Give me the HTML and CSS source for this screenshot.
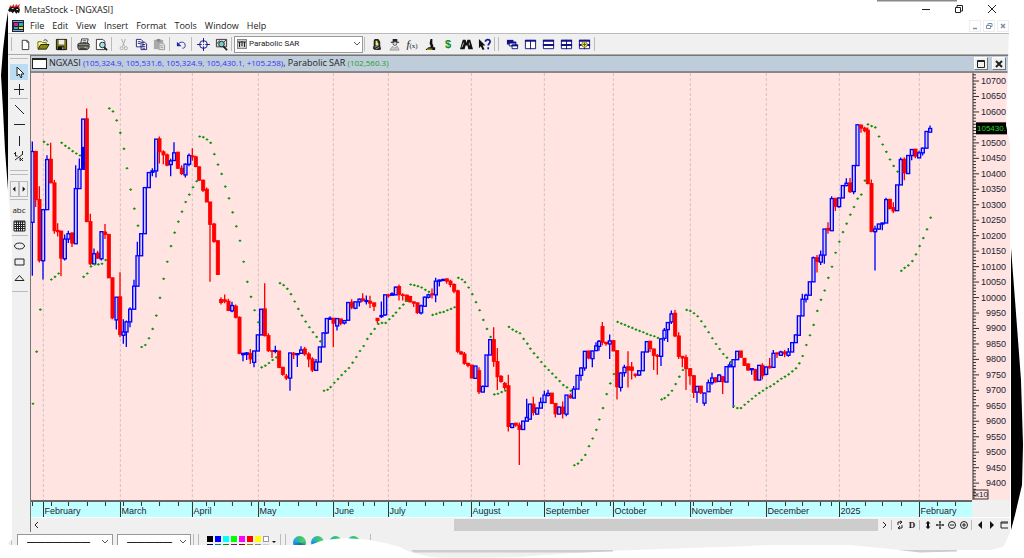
FILE: index.html
```html
<!DOCTYPE html>
<html lang="en">
<head>
<meta charset="utf-8">
<title>MetaStock - [NGXASI]</title>
<link rel="stylesheet" href="styles.css">
</head>
<body>
<div class="app">
  <header class="titlebar">
    <svg class="logo" viewBox="0 0 14 12" aria-hidden="true"><path d="M1 4 3 1 4 3 6 0 7 3 9 0 10 2 13 0 12 3 13 5H2z" fill="#d22"/><path d="M1 5 4 3 7 4 10 3 13 6 12 10 10 9 9 11 7 8 5 10 3 8 2 9 0 7z" fill="#111"/><path d="M4 5h2M9 6h2" stroke="#fff"/></svg>
    <h1>MetaStock - [NGXASI]</h1>
    <div class="window-buttons">
      <button aria-label="Minimize"><svg viewBox="0 0 10 10"><path d="M1 5.500h8" /></svg></button>
      <button aria-label="Restore"><svg viewBox="0 0 10 10"><path d="M1.500 3.500h5v5h-5zM3 3.500v-2h5.500V7H7"/></svg></button>
      <button aria-label="Close"><svg viewBox="0 0 10 10"><path d="M1 1l8 8M9 1L1 9"/></svg></button>
    </div>
  </header>
  <nav class="menubar">
    <svg class="doc-icon" viewBox="0 0 12 12" aria-hidden="true"><path fill="#223" d="M0 0h12v12H0z"/><path fill="#78a8e0" d="M1 1h10v1H1zM1 10h10v1H1z"/><path fill="#e0208a" d="M2 3h4v3H2z"/><path fill="#22b8b0" d="M7 3h4v3H7zM2 7h4v2H2z"/><path fill="#e8d838" d="M7 7h4v2H7z"/></svg>
    <button>File</button><button>Edit</button><button>View</button><button>Insert</button><button>Format</button><button>Tools</button><button>Window</button><button>Help</button>
    <div class="mdi-buttons">
      <button aria-label="Minimize chart"><svg viewBox="0 0 10 10"><path d="M3 7.500h4" stroke-width="1.500"/></svg></button>
      <button aria-label="Restore chart"><svg viewBox="0 0 10 10"><path d="M2.500 4.500h4v3h-4zM4 4.500v-2h4v3H7"/></svg></button>
      <button aria-label="Close chart"><svg viewBox="0 0 10 10"><path d="M3 3l4 4M7 3L3 7" stroke-width="1.500"/></svg></button>
    </div>
  </nav>
  <div class="toolbar">
    <span class="grip"></span>
    <button aria-label="New"><svg viewBox="0 0 14 14"><path d="M3.500 2.500h5l2 2v8h-7zM8.500 2.500v2h2" fill="#fff" stroke="#333"/></svg></button>
    <button aria-label="Open"><svg viewBox="0 0 14 14"><path d="M1 11V4h4l1 1h4v2" fill="#ffff9c" stroke="#660"/><path d="M1 12l3-5h9l-3 5z" fill="#8a8a10" stroke="#220"/><path d="M7 3c2-2 4-1 4 1" fill="none" stroke="#222"/></svg></button>
    <button aria-label="Save"><svg viewBox="0 0 14 14"><path d="M1.500 1.500h11v11h-11z" fill="#7b7b12" stroke="#111"/><path d="M4 2h6v5H4z" fill="#eee"/><path d="M3 9h7v4H3z" fill="#111"/><path d="M8 10h1v2H8z" fill="#fff"/></svg></button>
    <i class="sep"></i>
    <button aria-label="Print"><svg viewBox="0 0 14 14"><path d="M4 6l1-5h7l-1 5z" fill="#fff" stroke="#333"/><path d="M6 3h4M6 5h4" stroke="#444"/><path d="M1 6.500l2-1h9l1 1v4l-2 2H2l-1-2z" fill="#888" stroke="#222"/><path d="M1 8.500h11M3 11h7" stroke="#222"/><path d="M8 10h2" stroke="#dd3"/></svg></button>
    <button aria-label="Print preview"><svg viewBox="0 0 14 14"><path d="M1.500 1.500h7l2 2v9h-9z" fill="#fff" stroke="#333"/><circle cx="8" cy="7.500" r="3" fill="#a8e4e4" stroke="#222"/><path d="M10 10l3 3" stroke="#222" stroke-width="2"/></svg></button>
    <i class="sep"></i>
    <button aria-label="Cut"><svg viewBox="0 0 14 14"><g fill="none" stroke="#aaa"><path d="M5 1l3 8M9 1L6 9"/><circle cx="5" cy="11" r="1.700"/><circle cx="9.500" cy="11" r="1.700"/></g></svg></button>
    <button aria-label="Copy"><svg viewBox="0 0 14 14"><path d="M1.500 1.500h5l2 2v6h-7zM6.500 4.500h4l2 2v6h-6z" fill="#fff" stroke="#227"/><path d="M3 4h3M3 6h3M8 7h3M8 9h3M8 11h3" stroke="#227"/></svg></button>
    <button aria-label="Paste"><svg viewBox="0 0 14 14"><path d="M1 2h10v10H1z" fill="#aaa"/><path d="M4 1h4v3H4z" fill="#888"/><path d="M6.500 5.500h4l2 2v5h-6z" fill="#ddd" stroke="#999"/><path d="M8 8h2M8 10h3" stroke="#999"/></svg></button>
    <i class="sep"></i>
    <button aria-label="Undo"><svg viewBox="0 0 14 14"><path d="M3 7c3-4 8-3 8 1 0 2-1 3-3 3" fill="none" stroke="#22a"/><path d="M2 4v5h5z" fill="#22a"/></svg></button>
    <i class="sep"></i>
    <button aria-label="Crosshair"><svg viewBox="0 0 14 14"><circle cx="7" cy="7" r="4.200" fill="none" stroke="#118"/><path d="M7 0v5M7 9v5M0 7h5M9 7h5" stroke="#118"/><path d="M7 6.500v1" stroke="#118"/></svg></button>
    <button aria-label="Zoom"><svg viewBox="0 0 14 14"><path d="M1.500 1.500h11v8h-11z" fill="#ddd" stroke="#333"/><path d="M2 6l3-3 3 3 4-4" fill="none" stroke="#333"/><circle cx="7" cy="6.500" r="3" fill="#7cc" stroke="#222"/><path d="M9 9l4 4" stroke="#222" stroke-width="2"/></svg></button>
    <i class="sep"></i>
    <label class="combo">
      <svg class="combo-icon" viewBox="0 0 10 10" aria-hidden="true"><path d="M0 0h10v10H0z" fill="#888"/><path d="M1 1h8v8H1z" fill="#ccc"/><path d="M2.500 3v5M5 2v5M7.500 3v5M1 3h8" stroke="#222"/></svg>
      <select aria-label="Indicator"><option>Parabolic SAR</option></select>
      <svg class="chevron" viewBox="0 0 8 8" aria-hidden="true"><path d="M1 2l3 3 3-3"/></svg>
    </label>
    <i class="sep"></i>
    <button aria-label="Expert advisor"><svg viewBox="0 0 14 14"><path d="M5 1h4l2 3v4l1 4-2 1H5l-2-2 1-3V3z" fill="#222"/><path d="M6 3h2v2h1v3H6z" fill="#ee6"/><path d="M5 10l4-2M6 12l4-2" stroke="#aaa"/></svg></button>
    <button aria-label="Expert"><svg viewBox="0 0 14 14"><path d="M5 1h5v3h2v1H3V4h2z" fill="#223"/><circle cx="7.500" cy="6" r="2" fill="#ddd" stroke="#555"/><path d="M2 13l3-4 2 2 3-2 2 4z" fill="#ccc" stroke="#999"/></svg></button>
    <button class="fx" aria-label="Indicator builder"><em>f</em><small>(x)</small></button>
    <button aria-label="Explorer"><svg viewBox="0 0 14 14"><path d="M7 1h2v5l1 2v2h2v3H2v-1l3-2h2V8L6 6z" fill="#111"/><path d="M3 12h6" stroke="#dd3"/></svg></button>
    <button class="dollar" aria-label="System tester">$</button>
    <button aria-label="Find"><svg viewBox="0 0 14 14"><path d="M3 2h3l1 3 1-3h3l3 10H9L8 8H6l-1 4H0z" fill="#111"/><path d="M4 5l-2 5M10 5v3" stroke="#bbb"/></svg></button>
    <button aria-label="Context help"><svg viewBox="0 0 14 14"><path d="M1 1v10l2-2 2 4 2-1-2-4h3z" fill="#111"/><path d="M8 4c0-3 5-3 5 0 0 2-2 2-2 4M11 10v2" fill="none" stroke="#119" stroke-width="1.800"/></svg></button>
    <i class="sep"></i><span class="grip wide"></span>
    <button aria-label="Cascade"><svg viewBox="0 0 14 14"><path d="M1 2h7v5H1z" fill="#118"/><path d="M3.500 4.500h7v4h-7z" fill="#fff" stroke="#118"/><path d="M3 4h8v2H3z" fill="#118"/><path d="M6.500 7.500h6v4h-6z" fill="#fff" stroke="#118"/><path d="M6 7h7v2H6z" fill="#118"/></svg></button>
    <button aria-label="Tile columns"><svg viewBox="0 0 14 14"><path d="M1.500 2.500h11v9h-11zM7 2v10" fill="#fff" stroke="#118"/><path d="M1 3h12" stroke="#118" stroke-width="2"/></svg></button>
    <button aria-label="Tile rows"><svg viewBox="0 0 14 14"><path d="M1.500 2.500h11v9h-11z" fill="#fff" stroke="#118"/><path d="M1 3h12M1 7.500h12" stroke="#118" stroke-width="2"/></svg></button>
    <button aria-label="Tile grid"><svg viewBox="0 0 14 14"><path d="M1.500 2.500h11v9h-11zM7 2v10" fill="#fff" stroke="#118"/><path d="M1 3h12M1 7.500h12" stroke="#118" stroke-width="2"/></svg></button>
    <button aria-label="Layout"><svg viewBox="0 0 14 14"><path d="M1.500 2.500h11v9h-11zM7 2v10" fill="#fff" stroke="#118"/><path d="M1 3h12M1 7.500h12" stroke="#118" stroke-width="2"/><circle cx="7" cy="7" r="3" fill="#fe3" stroke="#774"/><path d="M7 5v4M5 7h4" stroke="#552"/></svg></button>
    <i class="sep"></i>
  </div>
  <div class="workspace">
    <aside class="tools">
      <hr>
      <button class="active" aria-label="Select"><svg viewBox="0 0 16 16"><path d="M6 3v9l2-2 2 4 1-1-1-3h3z" fill="#fff" stroke="#222"/></svg></button>
      <button aria-label="Crosshair"><svg viewBox="0 0 16 16"><path d="M3 8.500h10M8.500 3v11"/></svg></button>
      <hr>
      <button aria-label="Trendline"><svg viewBox="0 0 16 16"><path d="M4 4l9 9"/></svg></button>
      <button aria-label="Horizontal line"><svg viewBox="0 0 16 16"><path d="M3 7.500h11"/></svg></button>
      <button aria-label="Vertical line"><svg viewBox="0 0 16 16"><path d="M8.500 3v10"/></svg></button>
      <button aria-label="Retracement"><svg viewBox="0 0 16 16"><path d="M4 11l8-6M4.500 3v4h2M3 4.500h2M11.500 2v3M9 8.500v3M9 9l3 3M12 9l-3 3"/></svg></button>
      <hr class="gap"><hr class="short">
      <div class="spin"><button aria-label="Scroll left"><svg viewBox="0 0 8 14"><path d="M5 4v6L2 7z" fill="#111" stroke="none"/></svg></button><button aria-label="Scroll right"><svg viewBox="0 0 8 14"><path d="M3 4v6l3-3z" fill="#111" stroke="none"/></svg></button></div>
      <hr>
      <button class="abc">abc</button>
      <button aria-label="Grid"><svg viewBox="0 0 16 16"><path d="M3 3h11v10H3zM3 4h11M3 6.500h11M3 8.500h11M3 10.500h11M5.500 3v10M7.500 3v10M9.500 3v10M11.500 3v10"/></svg></button>
      <hr>
      <button aria-label="Ellipse"><svg viewBox="0 0 16 16"><ellipse cx="8.500" cy="8" rx="5" ry="3"/></svg></button>
      <button aria-label="Rectangle"><svg viewBox="0 0 16 16"><path d="M4 5h9v6H4z"/></svg></button>
      <button aria-label="Triangle"><svg viewBox="0 0 16 16"><path d="M4 10.500l4.500-5 4.500 5z"/></svg></button>
      <hr class="gap">
    </aside>
    <main class="window">
      <div class="caption">
        <span class="caption-icon"></span>
        <p>NGXASI <span class="quote">(105,324.9, 105,531.6, 105,324.9, 105,430.1, +105.258)</span>, Parabolic SAR <span class="sar">(102,560.3)</span></p>
        <button aria-label="Maximize"><svg viewBox="0 0 12 12"><path d="M2.500 2.500h7v7h-7zM2 3.500h8"/></svg></button>
        <button aria-label="Close"><svg viewBox="0 0 12 12"><path d="M3 3l6 6M9 3l-6 6" stroke-width="2"/></svg></button>
      </div>
      <div class="plot">
        <svg id="chart" class="chart" viewBox="93 219 2823 1278" preserveAspectRatio="none" role="img" aria-label="NGXASI price with Parabolic SAR"></svg>
        <svg id="scale" class="scale"></svg>
        <svg id="dates" class="dates"></svg>
      </div>
      <div class="scroll-row">
        <button aria-label="Back"><svg viewBox="0 0 10 10"><path d="M6 2L3 5l3 3"/></svg></button>
        <div class="track"><div class="thumb"></div></div>
        <button aria-label="Forward"><svg viewBox="0 0 10 10"><path d="M4 2l3 3-3 3"/></svg></button>
        <i class="sep"></i>
        <button aria-label="Refresh"><svg viewBox="0 0 10 10"><path d="M3 5V2h4M5 1l2 1-2 2M7 5v3H3M5 9L3 8l2-2"/></svg></button>
        <button class="period">D</button>
        <i class="sep"></i>
        <button aria-label="Fit"><svg viewBox="0 0 10 10"><path d="M5 1l2.500 2.500H6v3h1.500L5 9 2.500 6.500H4v-3H2.500z" fill="#111" stroke="none"/></svg></button>
        <button aria-label="Pan"><svg viewBox="0 0 10 10"><path d="M1 5h8M5 1v8M4 2h2M4 8h2M2 4v2M8 4v2"/></svg></button>
        <button aria-label="Zoom out"><svg viewBox="0 0 10 10"><circle cx="5" cy="5" r="3.500"/><path d="M3 5h4"/></svg></button>
        <button aria-label="Zoom in"><svg viewBox="0 0 10 10"><circle cx="5" cy="5" r="3.500"/><path d="M3 5h4M5 3v4"/></svg></button>
        <i class="sep"></i>
        <button aria-label="Previous"><svg viewBox="0 0 10 10"><path d="M7 1v8L3 5z" fill="#111" stroke="none"/></svg></button>
        <button aria-label="Next"><svg viewBox="0 0 10 10"><path d="M3 1v8l4-4z" fill="#111" stroke="none"/></svg></button>
        <button aria-label="Panel"><svg viewBox="0 0 10 10"><path d="M9 2H2v6h7M2 3h7"/></svg></button>
      </div>
    </main>
  </div>
  <footer class="styles-bar">
    <span class="grip"></span>
    <label class="combo line"><select aria-label="Line style"><option>———————</option></select><svg class="chevron" viewBox="0 0 8 8" aria-hidden="true"><path d="M1 2l3 3 3-3"/></svg></label>
    <label class="combo weight"><select aria-label="Line weight"><option>—————</option></select><svg class="chevron" viewBox="0 0 8 8" aria-hidden="true"><path d="M1 2l3 3 3-3"/></svg></label>
    <i class="sep"></i><i class="sep"></i>
    <div class="palette">
      <i class="black"></i><i class="blue"></i><i class="cyan"></i><i class="lime"></i><i class="magenta"></i><i class="red"></i><i class="yellow"></i><i class="white"></i>
      <i class="navy"></i><i class="teal"></i><i class="green"></i><i class="purple"></i><i class="maroon"></i><i class="olive"></i><i class="gray"></i><i class="silver"></i>
    </div>
    <button class="more" aria-label="More colors"><svg viewBox="0 0 6 6"><path d="M1 2h4L3 4z" fill="#111" stroke="none"/></svg></button>
    <i class="sep"></i><i class="sep"></i>
    <div class="links"><i class="edge"></i><i class="edge"></i><i class="edge"></i><i class="edge"></i></div>
    <i class="sep"></i>
  </footer>
</div>
<svg class="torn" viewBox="0 0 1024 558" preserveAspectRatio="none" aria-hidden="true">
  <path fill="#fff" d="M0 0H8V188L12 240V540L8 543H0z"/>
  <path fill="#000" d="M8 12L6 24 3 50 1 75 3 110 5 150 8 190z"/>
  <path fill="#fff" d="M1010 0H1024V558H1008L1011 530V150L1006 125 1008 60z"/>
  <path fill="#000" d="M1011 248L1015 300 1021 380 1023 445 1022 485 1015 515 1011 530z"/>
  <path fill="#fff" d="M0 543L12 545H310L324 540 345 538 370 540 385 543 400 547 410 552 430 557 445 558H0z"/>
  <path fill="#fff" d="M445 558L475 558 520 557 560 554 610 551 660 549 724 547 770 545 850 545 880 548 900 550 920 551 950 550 990 550 1003 547 1006 542 1011 530V558z"/>
  <path fill="#ccc" d="M411 550H613V551.500L580 552.500H414zM898 550H957V551.500L920 552.500z"/>
  <path fill="#888" d="M877 0H957V1.500H877z"/>
</svg>
<script src="chart.js"></script>
</body>
</html>
```

FILE: styles.css
```css
* { box-sizing: border-box; }
body { margin: 0; background: #fff; color: #222; font-family: "Open Sans", "Noto Sans", sans-serif; font-size: 9px; line-height: 12px; }
button { margin: 0; padding: 0; border: 0; background: none; font: inherit; color: inherit; display: flex; align-items: center; justify-content: center; }
button svg { fill: none; stroke: #222; display: block; }
h1, p { margin: 0; font-weight: 400; }
.app { min-height: 100vh; display: flex; flex-direction: column; padding: 0 14px 0 8px; }
.titlebar { height: 18px; display: flex; align-items: center; }
.logo { width: 13px; height: 11px; margin-right: 3px; }
.titlebar h1 { flex: 1; font-size: 9px; padding-top: 2px; }
.window-buttons { display: flex; gap: 23px; padding-right: 13px; }
.window-buttons svg { width: 10px; height: 10px; }
.menubar { height: 15px; display: flex; align-items: center; padding-left: 4px; gap: 8px; }
.doc-icon { width: 12px; height: 12px; margin-right: -2px; }
.mdi-buttons { display: flex; gap: 2px; margin-left: auto; margin-right: 1px; }
.mdi-buttons button { width: 12px; height: 12px; border: 1px solid #eee; }
.mdi-buttons svg { width: 10px; height: 10px; stroke: #7890a8; }
.toolbar { height: 22px; display: flex; align-items: center; background: #f0f0f0; border-top: 1px solid #bbb; border-bottom: 1px solid #aaa; }
.toolbar button { width: 18px; height: 18px; flex: none; }
.toolbar button svg { width: 13px; height: 13px; stroke: none; }
.grip { width: 8px; flex: none; height: 14px; background: linear-gradient(#bbb, #bbb) 3px 0 / 1px 14px no-repeat; }
.grip.wide { width: 6px; background-position: 1px 0; }
.sep { width: 4px; height: 14px; flex: none; background: linear-gradient(#bbb, #bbb) 1px 0 / 1px 100% no-repeat; }
.combo { position: relative; width: 129px; height: 17px; display: flex; align-items: center; background: #fff; border: 1px solid #999; }
.combo select { appearance: none; width: 100%; border: 0; padding: 0 0 0 14px; background: none; font: 8px/12px Roboto, sans-serif; color: #222; }
.combo-icon { position: absolute; left: 2px; width: 10px; height: 10px; }
.chevron { position: absolute; right: 1px; width: 8px; height: 8px; fill: none; stroke: #555; }
.fx { font-family: "Liberation Serif", serif; font-size: 11px; }
.fx small { font-size: 7px; padding-top: 3px; }
.toolbar .dollar { color: #128a1c; font: bold 11px/12px "Liberation Sans", sans-serif; }
.workspace { flex: 1; display: flex; min-height: 0; background: #f0f0f0; }
.tools { width: 22px; flex: none; padding: 3px 2px 0; display: flex; flex-direction: column; background: #f0f0f0; }
.tools button { width: 18px; height: 16px; flex: none; }
.tools svg { width: 16px; height: 16px; }
.tools hr { width: 100%; margin: 1px 0 2px; height: 1px; border: 0; background: #bbb; flex: none; }
.tools hr:first-child { margin: 0 0 5px; }
.tools .gap { margin: 5px 0 3px; }
.tools .short { margin: 0 0 6px; }
.tools .active { background: #bcdcf4; margin-bottom: 1px; }
.tools .spin { display: flex; flex: none; margin-bottom: 1px; }
.tools .spin button { width: 9px; border: 1px solid #bbb; }
.tools .spin svg { width: 7px; height: 14px; }
.tools .abc { font-size: 8px; }
.window { flex: 1; min-width: 0; display: flex; flex-direction: column; border-left: 1px solid #777; }
.caption { height: 18px; display: flex; align-items: center; gap: 4px; background: #bfccda; border-top: 1px solid #777; border-bottom: 2px solid #888; padding: 0 4px 0 1px; }
.caption p { flex: 1; font-size: 9px; white-space: nowrap; height: 14px; }
.caption-icon { width: 15px; height: 11px; background: #fff; border: 1px solid #222; border-top-width: 2px; margin-right: -2px; }
.quote, .sar { font-size: 8px; }
.quote { color: #33f; }
.sar { color: #19a32a; }
.caption button { width: 14px; height: 13px; background: #f0f0f0; border: 1px solid; border-color: #fff #777 #777 #fff; }
.caption button svg { width: 12px; height: 12px; }
.plot { flex: 1; min-height: 0; display: grid; grid-template: minmax(0, 1fr) 17px / minmax(0, 1fr) 38px; }
.plot svg { display: block; width: 100%; height: 100%; }
.plot .chart, .plot .scale { background: #ffe4e1; }
.plot .dates { background: #bfffff; border-top: 2px solid #666; }
.plot text { font: 9px "Liberation Sans", Arial, sans-serif; fill: #223; }
.plot .last { fill: #1fdd1f; font-size: 8px; }
.plot .unit { font-size: 8px; }
.grid-line { stroke: #ccc4c0; stroke-width: 3; stroke-dasharray: 9 6; }
.tick { stroke: #333; stroke-width: 1; }
.up { fill: #d4c8f4; stroke: #00f; stroke-width: 4; }
.down { fill: #f00; stroke: #f00; stroke-width: 3; }
.up-solid { fill: #00f; }
.wick-up { stroke: #00f; stroke-width: 4; }
.wick-down { stroke: #f00; stroke-width: 4; }
.dot { fill: #119311; }
.scroll-row { height: 15px; display: flex; align-items: center; background: #f0f0f0; border-top: 1px solid #fff; }
.scroll-row button { width: 12px; height: 13px; flex: none; }
.scroll-row svg { width: 10px; height: 10px; }
.scroll-row .sep { width: 4px; height: 10px; }
.scroll-row .period { font: bold 9px/12px "Liberation Serif", serif; }
.track { flex: 1; height: 12px; padding-left: 42%; }
.thumb { height: 12px; background: #cdcdcd; }
.styles-bar { height: 26px; display: flex; align-items: flex-start; gap: 1px; padding-top: 2px; background: #f0f0f0; }
.styles-bar .line { width: 96px; }
.styles-bar .weight { width: 74px; margin-left: 3px; }
.styles-bar .combo { height: 16px; }
.combo.line select, .combo.weight select { padding-left: 9px; font: bold 9px/12px "Liberation Sans", sans-serif; }
.styles-bar .combo .chevron { right: 3px; }
.styles-bar .sep { height: 18px; }
.palette { display: grid; grid-template-columns: repeat(8, 6px); gap: 2px; margin-left: 5px; padding-top: 2px; }
.palette i { height: 6px; }
.black { background: #000; }
.blue { background: #00f; }
.cyan { background: #0ff; }
.lime { background: #0f0; }
.magenta { background: #f0f; }
.red { background: #f00; }
.yellow { background: #ff0; }
.white { background: #fff; border: 1px solid #999; }
.navy { background: #008; }
.teal { background: #088; }
.green { background: #080; }
.purple { background: #808; }
.maroon { background: #800; }
.olive { background: #880; }
.gray { background: #888; }
.silver { background: #ccc; }
.more { width: 8px; height: 16px; }
.links { display: flex; gap: 5px; margin: 2px 8px 0 4px; }
.more svg { width: 6px; height: 6px; }
.edge { width: 13px; height: 13px; border-radius: 50%; background: conic-gradient(#36c46a, #4cd070 20%, #1560b0 40%, #1878c8 65%, #28b0d8 85%, #36c46a); }
.torn { position: absolute; inset: 0; width: 100%; height: 100%; pointer-events: none; }
```

FILE: chart.js
```js
// Bars and dots are listed per block, relative to the block origin, in thirds of a pixel.
// Bar: direction (u/d), x, high, body top, body bottom, low.
const blocks = [
  { x: 60, y: 270,
    bars: `u37,154,184,396,556 d47,182,184,328,350 d58,288,328,510,516 u69,358,358,511,567 u81,195,208,358,358 d92,158,207,278,278 d103,269,278,421,430 d113,399,420,424,438 d123,422,422,503,557 u134,432,446,505,510 u145,421,430,446,458 d156,426,428,458,470 u167,225,295,460,460 u178,205,237,295,295 u189,87,87,237,237 d200,55,86,394,394 d211,370,394,520,524 u222,474,490,520,520 d233,481,488,503,506 u244,424,424,505,510 d255,401,425,432,446 d266,432,432,562,562 d277,562,562,682,686 u289,620,620,688,717 d300,545,619,732,740 u310,686,724,734,759 u319,690,694,724,769 u330,650,656,694,710 u342,568,587,656,656 u352,454,496,587,587 u363,430,430,496,496 u374,292,292,430,430 u386,245,247,292,292 u397,234,242,246,258 u408,147,147,242,262 d418,139,146,185,220 d430,180,185,194,222 d441,190,194,225,228 u452,206,212,223,258 u462,156,188,211,211 d473,186,186,234,236 d485,225,234,250,254 u496,220,222,254,262 u507,190,196,222,228 d517,174,197,200,212 d527,197,200,229,231 d537,228,230,270,272 d549,268,270,300,305 d560,292,297,335,335 d570,335,335,402,574 d582,397,401,453,457 d593,451,451,552,552`,
    dots: `39,939 50,783 61,657 72,155 83,163 94,567 105,559 116,549 125,158 136,167 147,174 158,183 169,190 180,196 191,559 202,549 213,528 224,522 235,522 246,520 257,509 268,55 279,64 290,91 301,128 312,176 321,234 332,298 343,355 354,406 365,769 376,763 387,743 398,715 409,675 420,622 431,565 442,514 453,467 464,427 475,394 486,364 497,335 508,313 519,291 530,273 539,139 550,141 561,148 572,158 583,192 594,223 605,251 616,289 627,324 638,366` },
  { x: 540, y: 390,
    bars: `d123,500,507,516,522 d134,492,508,512,518 d145,505,512,540,540 u156,514,525,541,545 d167,522,527,560,564 d178,558,560,668,671 u189,668,668,672,692 u200,664,667,671,688 d211,655,668,685,700 u222,660,661,695,710 u233,612,613,661,661 u243,536,536,613,613 d254,458,535,615,618 d265,608,615,660,664 d276,660,660,662,682 u286,645,660,662,668 d297,661,661,710,713 d308,708,710,731,735 d319,730,736,742,748 u330,667,667,742,780 d341,664,668,672,685 u352,667,669,672,709 u363,647,658,668,668 d374,649,655,670,675 d386,665,670,685,710 d397,680,685,718,724 u408,685,694,719,719 u419,649,649,694,694 u430,606,607,649,649 u440,564,564,607,610 u450,557,563,566,566 d460,562,563,578,650 u471,564,564,586,600 d482,565,565,578,584 u493,568,570,577,582 u504,516,516,569,569 d515,506,515,530,536 u526,514,514,533,536 u538,504,506,514,528 d548,488,505,510,514 u559,495,510,513,522 d570,496,512,518,532 d582,517,517,527,541 d592,562,563,570,578 u604,513,555,558,562 u615,493,493,553,556 d625,490,493,496,502 u636,485,490,494,494`,
    dots: `169,288 180,331 191,394 202,454 213,499 224,539 235,575 245,710 256,705 267,697 278,688 289,680 300,458 311,464 322,475 333,491 344,513 355,535 366,555 377,573 388,590 399,605 410,619 421,632 432,780 443,777 452,769 463,756 474,745 485,733 496,722 507,712 518,696 529,679 540,661 551,646 562,625 573,610 584,595 595,580 606,577 617,577 628,566 639,556` },
  { x: 1140, y: 720,
    bars: `u47,138,140,163,163 d57,132,138,162,180 d68,158,163,165,180 d80,162,164,182,184 d90,166,168,184,186 d101,183,184,188,199 d112,186,187,216,220 u123,192,196,217,222 u134,168,170,197,197 u145,160,163,170,174 d156,144,160,163,174 u167,112,122,163,185 u178,117,119,122,138 u189,115,117,120,120 d200,115,115,122,130 d211,118,122,132,140 d222,128,132,152,158 d233,148,151,332,338 d243,330,334,340,342 d253,334,340,368,372 d264,366,368,374,380 d275,373,373,412,412 u286,376,376,413,413 d297,380,390,453,460 u308,434,437,454,454 u319,343,343,437,437 u330,296,297,343,343 d341,260,297,362,378 d352,322,363,408,448 d363,403,407,422,426 d374,424,428,440,447 d385,402,435,557,572 u396,547,549,560,562 d407,547,547,553,558 d418,545,553,566,672 u429,540,541,566,566 u440,474,530,541,541 u449,490,490,535,535 d460,468,490,515,524 u471,500,502,520,520 u482,470,485,502,502 u493,450,463,485,485 u504,447,458,464,467 d515,457,457,488,490 d526,488,488,519,530 u537,497,499,520,520 d548,482,499,518,533 u559,463,463,520,526 d571,458,465,470,474`,
    dots: `48,216 59,203 70,192 81,181 92,132 103,134 114,137 125,141 136,148 147,154 158,223 169,220 180,216 191,214 202,209 213,205 224,200 235,112 246,117 255,125 266,141 277,161 288,185 299,209 310,238 321,265 332,289 343,461 354,459 365,454 376,450 387,259 398,267 409,273 420,278 431,295 442,309 451,324 462,338 473,350 484,364 495,377 506,388 517,399 528,410 539,421 550,433 561,440 572,450` },
  { x: 1680, y: 810,
    bars: `u41,346,355,382,382 u52,314,314,355,355 u63,290,292,314,330 u74,242,242,292,300 d86,240,241,262,266 u97,240,241,264,290 u108,215,226,240,240 u117,208,212,227,240 d127,154,168,215,224 d138,213,215,219,225 u149,192,211,220,265 d160,209,210,241,241 d171,240,240,348,386 u182,305,307,350,362 u193,282,290,306,318 d204,242,288,298,350 d215,274,289,299,326 d226,310,310,314,320 u237,298,300,313,316 u248,244,244,300,300 u260,213,213,244,244 d270,210,212,234,244 d281,234,235,254,298 d292,250,254,257,312 u303,202,205,257,286 u313,172,179,203,210 u323,154,156,177,214 u334,120,130,154,160 d345,118,128,196,200 d356,185,196,257,265 d367,256,257,262,290 d378,252,261,294,358 d390,292,294,315,342 d401,314,315,365,382 u411,346,347,364,396 d422,346,346,366,370 u433,366,367,397,405 u445,326,336,363,363 u456,306,322,336,342 d467,320,321,333,336 u477,310,313,332,332 d488,316,318,333,370 u499,287,288,334,334 u509,275,283,288,290 u520,265,267,288,412 u531,242,242,267,267 d542,241,241,260,260 d553,262,263,284,286 d564,278,280,298,300 u575,292,294,297,312 d586,295,296,328,330 u597,284,284,328,328 d607,278,284,315,326 u618,287,289,311,314 d629,262,287,291,294 u640,238,248,290,290`,
    dots: `43,583 54,578 65,567 76,552 87,526 98,503 109,477 118,446 129,412 140,370 151,338 162,310 173,154 184,159 195,163 206,168 217,172 228,177 239,181 250,185 261,190 272,194 283,197 294,202 305,386 314,382 325,373 336,360 347,340 358,318 369,298 380,118 391,121 402,128 413,137 424,152 435,168 446,185 457,203 468,220 479,235 490,250 501,261 512,274 521,406 532,412 543,412 554,402 565,393 576,384 587,375 598,367 609,360 620,352 631,347 642,340 653,332` },
  { x: 2220, y: 330,
    bars: `d111,725,727,730,742 u122,720,724,734,736 d134,718,724,730,740 u145,712,724,734,738 u156,695,696,724,724 u167,672,673,696,696 u176,616,616,674,674 u187,550,566,616,616 u198,550,554,566,576 u209,514,514,554,554 u220,438,442,514,514 d231,434,442,453,486 u242,420,434,455,464 u253,356,356,434,460 d264,336,354,359,370 u275,258,265,361,361 d286,264,264,288,302 u297,262,263,289,292 u308,226,226,263,263 u319,204,219,226,228 d330,203,218,244,248 u341,166,166,244,252 u352,44,44,166,166 d363,43,45,54,68 d374,50,54,62,66 d383,52,60,220,222 d394,208,220,363,366 u405,346,356,364,480 u416,340,341,356,358 u427,337,338,341,360 u438,262,268,338,338 d449,266,267,295,297 d460,276,292,302,308 u471,224,224,301,301 u482,142,148,224,224 d493,142,147,188,210 u504,135,136,190,190 u515,117,118,136,150 d526,116,117,138,144 u537,122,128,143,143 u548,112,114,128,136 u559,64,64,114,114 u570,46,55,66,66`,
    dots: `124,804 135,798 146,791 157,782 168,773 178,758 188,736 199,703 210,674 221,643 232,601 243,568 254,540 265,502 276,469 287,427 298,394 309,365 320,340 331,313 342,290 353,265 364,253 375,211 384,43 395,48 406,52 417,79 428,103 439,125 450,148 461,167 473,184 484,481 494,472 505,465 517,452 528,432 539,407 550,383 561,357 572,322` }
];
const months = [[43, "February"], [120, "March"], [192, "April"], [258, "May"], [333, "June"], [388, "July"], [471, "August"], [544, "September"], [613, "October"], [690, "November"], [766, "December"], [839, "2025"], [919, "February"]];
const weeks = [32, 51, 68, 87, 105, 123, 141, 159, 178, 206, 214, 232, 251, 264, 279, 298, 316, 348, 363, 374, 406, 425, 443, 461, 479, 494, 508, 527, 563, 581, 596, 610, 624, 643, 661, 675, 693, 712, 730, 748, 785, 802, 820, 831, 846, 865, 882, 901, 937, 955];

const line = (cls, x1, y1, x2, y2) => `<line class="${cls}" x1="${x1}" y1="${y1}" x2="${x2}" y2="${y2}"/>`;
let out = months.map(([x]) => line("grid-line", x * 3 + 1, 219, x * 3 + 1, 1497)).join("");
for (const block of blocks) {
  out += `<g transform="translate(${block.x} ${block.y})">`;
  for (const bar of block.bars.split(/\s+/)) {
    const up = bar[0] === "u";
    const [x, high, top, bottom, low] = bar.slice(1).split(",").map(Number);
    out += line(up ? "wick-up" : "wick-down", x, high, x, low);
    out += `<rect class="${up ? "up" : "down"}" x="${x - 4}" y="${top}" width="9" height="${Math.max(bottom - top, 1)}"/>`;
  }
  for (const dot of block.dots.split(/\s+/)) {
    const [x, y] = dot.split(",").map(Number);
    out += `<path class="dot" d="M${x - 5} ${y}l5-4 5 4-5 4z"/>`;
  }
  out += "</g>";
}
out += `<rect class="up-solid" x="243" y="440" width="12" height="67"/>`;
document.getElementById("chart").innerHTML = out;

const pct = v => v.toFixed(2) + "%";
const left = x => pct((x - 30.5) / 941 * 100);
document.getElementById("dates").innerHTML =
  weeks.map(x => line("tick", left(x), 0, left(x), 4)).join("") +
  months.map(([x, name]) => line("tick", left(x), 0, left(x), 15) + `<text x="${left(x)}" dx="1" y="12">${name}</text>`).join("");

// 10700 sits 8px below the top of the 426px plot; one step of 50 is 15.43px.
const at = price => (8 + (10700 - price) / 50 * 15.43) / 426 * 100;
let scale = line("tick", 1, 0, 1, "100%");
for (let p = 10720; p >= 9360; p -= 10) scale += line("tick", 1, pct(at(p)), p % 50 ? 4 : 7, pct(at(p)));
for (let p = 10700; p >= 9400; p -= 50) {
  if (p !== 10550) scale += `<text x="34" y="${pct(at(p))}" dy="3" text-anchor="end">${p}</text>`;
}
scale += `<svg y="${pct(at(10547))}" overflow="visible"><rect x="4" y="-6" width="31" height="12"/><text class="last" x="5" y="3">105430.</text></svg>`;
scale += `<svg y="100%" overflow="visible"><rect x="2" y="-10" width="14" height="9" fill="none" stroke="#333"/><text class="unit" x="3" y="-3">x10</text></svg>`;
document.getElementById("scale").innerHTML = scale;
```
